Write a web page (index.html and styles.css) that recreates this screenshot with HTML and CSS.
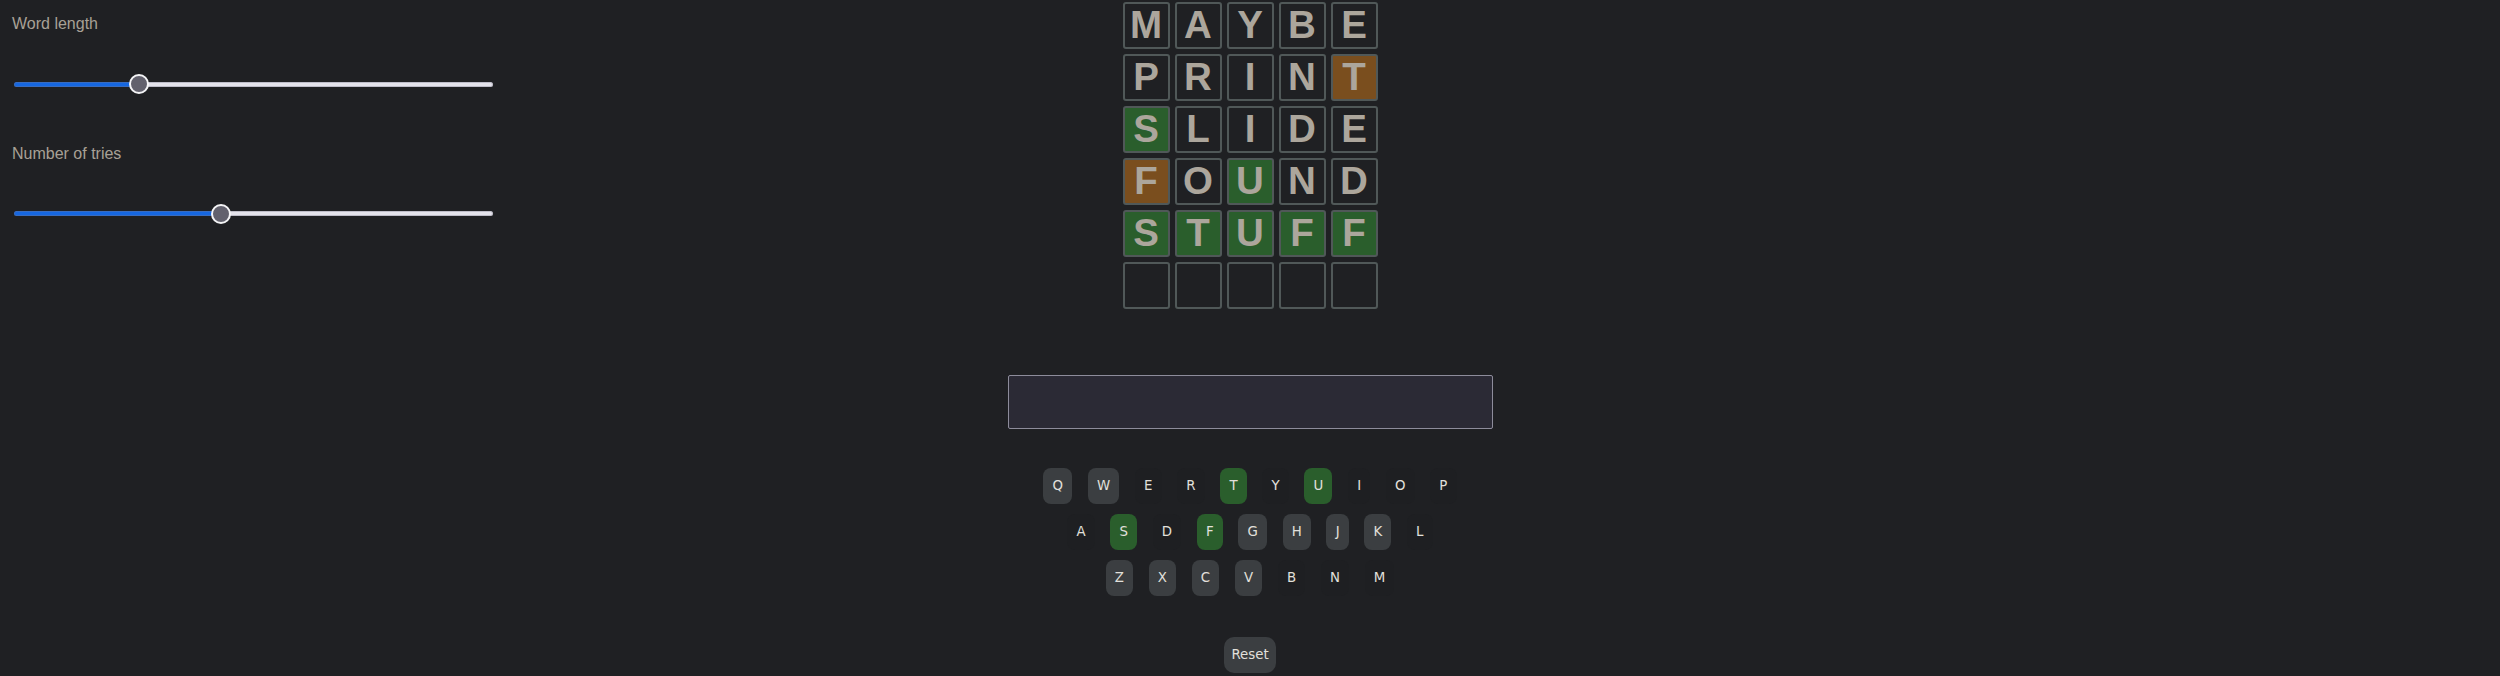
FILE: index.html
```html
<!DOCTYPE html>
<html lang="en">
<head>
<meta charset="utf-8">
<title>Wordle</title>
<link rel="stylesheet" href="styles.css">
</head>
<body>
<div class="app">
  <aside class="settings">
    <div class="setting">
      <label class="setting-label" for="len">Word length</label>
      <input class="slider" id="len" type="range" min="3" max="11" value="5" style="--fill: 26%">
    </div>
    <div class="setting">
      <label class="setting-label" for="tries">Number of tries</label>
      <input class="slider" id="tries" type="range" min="3" max="10" value="6" style="--fill: 43.2%">
    </div>
  </aside>

  <main class="game">
    <div class="board">
      <div class="tile">M</div><div class="tile">A</div><div class="tile">Y</div><div class="tile">B</div><div class="tile">E</div>
      <div class="tile">P</div><div class="tile">R</div><div class="tile">I</div><div class="tile">N</div><div class="tile present">T</div>
      <div class="tile correct">S</div><div class="tile">L</div><div class="tile">I</div><div class="tile">D</div><div class="tile">E</div>
      <div class="tile present">F</div><div class="tile">O</div><div class="tile correct">U</div><div class="tile">N</div><div class="tile">D</div>
      <div class="tile correct">S</div><div class="tile correct">T</div><div class="tile correct">U</div><div class="tile correct">F</div><div class="tile correct">F</div>
      <div class="tile"></div><div class="tile"></div><div class="tile"></div><div class="tile"></div><div class="tile"></div>
    </div>

    <input class="guess" type="text" aria-label="Guess">

    <div class="keyboard">
      <div class="key-row">
        <button class="key unused">Q</button>
        <button class="key unused">W</button>
        <button class="key absent">E</button>
        <button class="key absent">R</button>
        <button class="key correct">T</button>
        <button class="key absent">Y</button>
        <button class="key correct">U</button>
        <button class="key absent">I</button>
        <button class="key absent">O</button>
        <button class="key absent">P</button>
      </div>
      <div class="key-row">
        <button class="key absent">A</button>
        <button class="key correct">S</button>
        <button class="key absent">D</button>
        <button class="key correct">F</button>
        <button class="key unused">G</button>
        <button class="key unused">H</button>
        <button class="key unused">J</button>
        <button class="key unused">K</button>
        <button class="key absent">L</button>
      </div>
      <div class="key-row">
        <button class="key unused">Z</button>
        <button class="key unused">X</button>
        <button class="key unused">C</button>
        <button class="key unused">V</button>
        <button class="key absent">B</button>
        <button class="key absent">N</button>
        <button class="key absent">M</button>
      </div>
    </div>

    <button class="reset">Reset</button>
  </main>

  <div class="spacer"></div>
</div>
</body>
</html>
```

FILE: styles.css
```css
html, body {
  margin: 0;
  padding: 0;
}

body {
  background: #1f2023;
  min-height: 100vh;
  font-family: "Liberation Sans", Arial, sans-serif;
}

.app {
  display: grid;
  grid-template-columns: 1fr auto 1fr;
}

/* ---------- settings ---------- */
.settings {
  padding: 15px 0 0 12px;
  display: flex;
  flex-direction: column;
}

.setting {
  display: flex;
  flex-direction: column;
  align-items: flex-start;
  width: 483px;
  height: 129.5px;
}

.setting-label {
  color: #a8a196;
  font-size: 16px;
  line-height: 18px;
}

.slider {
  -webkit-appearance: none;
  appearance: none;
  width: 479px;
  height: 20px;
  margin: 41px 2px 0 2px;
  padding: 0;
  background: transparent;
}

.slider::-webkit-slider-runnable-track {
  height: 5px;
  border-radius: 3px;
  background: linear-gradient(to right, #1667e0 0, #1667e0 var(--fill), #e4e3eb var(--fill), #e4e3eb 100%);
  box-shadow: inset 0 0 0 1px rgba(120, 118, 135, 0.35);
}

.slider::-webkit-slider-thumb {
  -webkit-appearance: none;
  appearance: none;
  width: 20px;
  height: 20px;
  margin-top: -7.5px;
  border-radius: 50%;
  background: #62616d;
  border: 2px solid #f4f4f6;
  box-sizing: border-box;
}

/* ---------- game ---------- */
.game {
  display: flex;
  flex-direction: column;
  align-items: center;
  padding-top: 2px;
}

.board {
  display: grid;
  grid-template-columns: repeat(5, 47px);
  grid-auto-rows: 47px;
  gap: 5px;
}

.tile {
  box-sizing: border-box;
  border: 2px solid #505858;
  border-radius: 3px;
  display: flex;
  align-items: center;
  justify-content: center;
  color: #aca69c;
  font-family: "Liberation Sans", Arial, sans-serif;
  font-weight: bold;
  font-size: 38.5px;
  line-height: 1;
}

.tile.correct {
  background: #2a5e2c;
}

.tile.present {
  background: #7a4e1e;
}

.guess {
  margin-top: 66px;
  width: 485px;
  height: 54px;
  box-sizing: border-box;
  background: #2b2a35;
  border: 1px solid #8d8c9b;
  border-radius: 2px;
  color: #e4e2de;
  outline: none;
}

.keyboard {
  margin-top: 38.5px;
  display: flex;
  flex-direction: column;
  gap: 10px;
}

.key-row {
  display: flex;
  justify-content: center;
  gap: 15.5px;
}

.key {
  font-family: "DejaVu Sans", sans-serif;
  font-size: 13.333px;
  line-height: 16px;
  padding: 10px 9.2px;
  border: none;
  border-radius: 8px;
  color: #e2e0dc;
  background: #1e1f22;
}

.key.unused {
  background: #3b3e41;
}

.key.correct {
  background: #2a5e2c;
}

.reset {
  margin-top: 41px;
  font-family: "DejaVu Sans", sans-serif;
  font-size: 13.333px;
  line-height: 16px;
  padding: 10px 7px;
  border: none;
  border-radius: 10px;
  color: #e2e0dc;
  background: #3b3e41;
}
```
